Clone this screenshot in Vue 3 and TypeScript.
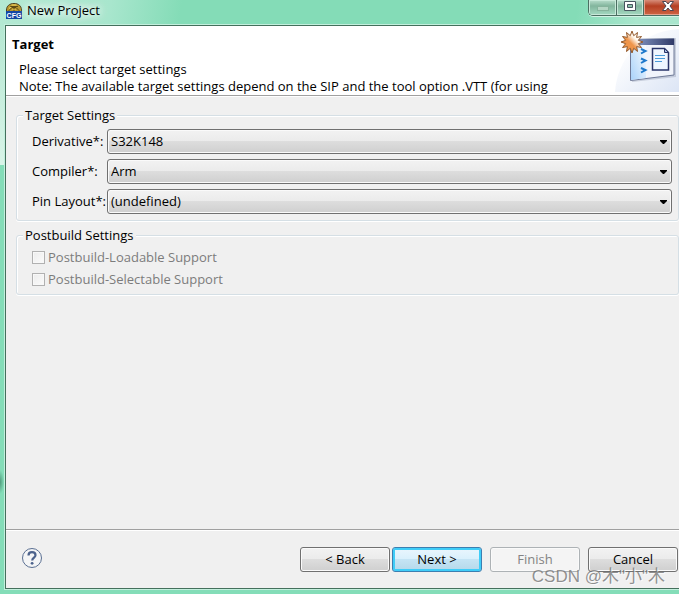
<script setup lang="ts">
import { reactive } from 'vue'

interface SelectField {
  id: string
  label: string
  value: string
}

interface CheckField {
  id: string
  label: string
  checked: boolean
}

const targetFields = reactive<SelectField[]>([
  { id: 'derivative', label: 'Derivative*:', value: 'S32K148' },
  { id: 'compiler', label: 'Compiler*:', value: 'Arm' },
  { id: 'pin-layout', label: 'Pin Layout*:', value: '(undefined)' },
])

const postbuildFields = reactive<CheckField[]>([
  { id: 'loadable', label: 'Postbuild-Loadable Support', checked: false },
  { id: 'selectable', label: 'Postbuild-Selectable Support', checked: false },
])
</script>

<template>
  <div class="window">
    <header class="titlebar">
      <svg class="app-icon" viewBox="0 0 16 16" aria-hidden="true">
        <path d="M.5 10V7C.5 3 3.500.5 8 .5S15.500 3 15.500 7v3z" fill="#b8982f" stroke="#4a4020" />
        <path d="M2.500 8l3.500-3.500h4L13.500 8M8 4.500V8M4 3.500h8" fill="none" stroke="#5c4a14" />
        <path d="M3 5.500l2-1.500M5.500 2h5M7 6v1M9 6v1" stroke="#f1d768" />
        <rect y="8" width="16" height="8" fill="#1446a4" />
        <text class="app-icon-text" x="8" y="15" text-anchor="middle" fill="#fff">CFG</text>
      </svg>
      <h1 class="title">New Project</h1>
      <div class="controls">
        <button class="control minimize" type="button" aria-label="Minimize" disabled>
          <svg viewBox="0 0 12 12" aria-hidden="true">
            <rect x=".5" y="6.500" width="11" height="4" fill="#b4d6c4" stroke="#86b39c" />
          </svg>
        </button>
        <button class="control maximize" type="button" aria-label="Maximize">
          <svg viewBox="0 0 12 12" aria-hidden="true">
            <path d="M.5 1.500h11v9H.5z" fill="#fff" stroke="#485660" />
            <path d="M3.500 4.500h5v3h-5z" fill="#8cc4aa" stroke="#485660" />
          </svg>
        </button>
        <button class="control close" type="button" aria-label="Close">
          <svg viewBox="0 0 12 12" aria-hidden="true">
            <path
              d="M.5 1.500h3.500l2 2.500 2-2.500h3.500L8 6l3.500 4.500H8L6 8l-2 2.500H.5L4 6z"
              fill="#fff"
              stroke="#4c4450"
            />
          </svg>
        </button>
      </div>
    </header>

    <main class="client">
      <section class="banner">
        <div class="banner-text">
          <h2 class="banner-title">Target</h2>
          <p class="banner-message">
            Please select target settings<br />
            Note: The available target settings depend on the SIP and the tool option .VTT (for using
          </p>
        </div>
        <svg class="banner-art" viewBox="0 0 64 66" aria-hidden="true">
          <defs>
            <linearGradient id="glow" x1="0" y1="0" x2="1" y2="1">
              <stop offset=".2" stop-color="#fff" />
              <stop offset="1" stop-color="#dce5f5" />
            </linearGradient>
            <linearGradient id="bar" x1="0" x2="1" y1="0" y2="0">
              <stop offset="0" stop-color="#8ca0cc" />
              <stop offset="1" stop-color="#303a68" />
            </linearGradient>
            <linearGradient id="side" x1="0" x2="1" y1="1" y2="0">
              <stop offset="0" stop-color="#a9d2fa" />
              <stop offset="1" stop-color="#fff" />
            </linearGradient>
            <linearGradient id="burst" x1="0" x2="1" y1="1" y2="0">
              <stop offset=".45" stop-color="#ef954a" />
              <stop offset=".65" stop-color="#fffaf2" />
            </linearGradient>
          </defs>
          <path d="M0 66C2 34 25 5 64 3v63z" fill="url(#glow)" />
          <path d="M17 17l44-5v39l-44 5z" fill="#9ba4b8" opacity=".45" />
          <path d="M15.500 13.500l43.500-1v36.500l-43.500 5.500z" fill="#f1f4fb" stroke="#6f7a98" />
          <path d="M16 14h15v38l-15 2z" fill="url(#side)" />
          <path d="M16 13h43v6H16z" fill="url(#bar)" />
          <path
            d="M26 23l4.500 2-4.500 2.500M26 32.500l4.500 2-4.500 2.500M26 42l4.500 2-4.500 2.500"
            fill="none"
            stroke="#1e78cb"
            stroke-width="2"
          />
          <path d="M37.500 22.500h12l4 4v17.500h-16z" fill="#eff6ff" stroke="#293469" stroke-width="1.500" />
          <path d="M49.500 22.500v4h4z" fill="#a8bce0" stroke="#293469" />
          <path d="M40 29.500h10M40 32.500h10M40 35.500h7" stroke="#4a9bd8" />
          <path
            d="M28 16l-4.700 1.700 3.200 3.800-4.900-.9.900 4.900-3.800-3.200L17 27l-1.700-4.700-3.800 3.200.9-4.900-4.900.9 3.200-3.800L6 16l4.700-1.700-3.200-3.800 4.900.9-.9-4.900 3.800 3.200L17 5l1.700 4.700 3.800-3.200-.9 4.900 4.900-.9-3.200 3.800z"
            fill="url(#burst)"
            stroke="#93592b"
          />
        </svg>
      </section>

      <form class="content" @submit.prevent>
        <fieldset class="group">
          <legend>Target Settings</legend>
          <div class="fields">
            <template v-for="field in targetFields" :key="field.id">
              <label :for="field.id">{{ field.label }}</label>
              <div class="combo">
                <select :id="field.id" v-model="field.value">
                  <option :value="field.value">{{ field.value }}</option>
                </select>
                <svg class="arrow" viewBox="0 0 7 4" aria-hidden="true">
                  <path d="M0 0h7v1L4 4H3L0 1z" />
                </svg>
              </div>
            </template>
          </div>
        </fieldset>

        <fieldset class="group">
          <legend>Postbuild Settings</legend>
          <div class="checks">
            <label v-for="field in postbuildFields" :key="field.id" class="check" :for="field.id">
              <input :id="field.id" v-model="field.checked" type="checkbox" disabled />
              {{ field.label }}
            </label>
          </div>
        </fieldset>
      </form>

      <footer class="footer">
        <button class="help" type="button" aria-label="Help">
          <svg viewBox="0 0 20 20" aria-hidden="true">
            <circle cx="10" cy="10" r="9.500" fill="#f4f5f6" stroke="#5a6f92" />
            <path
              d="M6.500 7.500C6.500 5 8 4.200 10 4.200s3.500 1 3.500 3c0 2.300-3.300 2.500-3.300 5.300"
              fill="none"
              stroke="#4c628c"
              stroke-width="2.200"
            />
            <circle cx="10.100" cy="15.300" r="1.400" fill="#4c628c" />
          </svg>
        </button>
        <div class="actions">
          <div class="pair">
            <button class="btn" type="button">&lt; Back</button>
            <button class="btn primary" type="button">Next &gt;</button>
          </div>
          <button class="btn" type="button" disabled>Finish</button>
          <button class="btn" type="button">Cancel</button>
        </div>
        <span class="watermark">CSDN @木"小"木</span>
      </footer>
    </main>
  </div>
</template>

<style>
body {
  margin: 0;
}
</style>

<style scoped>
.window {
  box-sizing: border-box;
  display: flex;
  flex-direction: column;
  min-height: 100vh;
  padding: 0 0 4px 4px;
  background:
    radial-gradient(ellipse 4px 12px at 0 482px, #4e9c7c, transparent),
    linear-gradient(#b5e8d2, #d9f4e8) 0 26px / 5px 139px no-repeat,
    linear-gradient(100deg, #b4e9d3, #a8e6cd 110px, #84dcb7 180px, #84dcb7 570px, #a9e6cd 630px) 0 0 / 100% 26px no-repeat,
    #84ddb8;
  color: #000;
  font: 13px/17px "Open Sans", "Noto Sans CJK SC", sans-serif;
}

.titlebar {
  display: flex;
  align-items: flex-start;
  height: 24px;
}

.app-icon {
  width: 16px;
  height: 16px;
  margin: 3px 5px 0 2px;
}

.app-icon-text {
  font: bold 7px "Liberation Sans", sans-serif;
}

.title {
  margin: 2px 0 0;
  font-size: 13px;
  font-weight: 400;
  text-shadow: 0 0 8px #fff, 0 0 8px #fff, 0 0 12px #fff;
}

.controls {
  display: flex;
  height: 15px;
  margin-left: auto;
  border: 1px solid #4c6f62;
  border-width: 0 0 1px 1px;
  border-radius: 0 0 0 5px;
  overflow: hidden;
  box-shadow: 0 1px #d3f3e5;
}

.control {
  display: flex;
  justify-content: center;
  width: 28px;
  padding: 0;
  border: 0;
  border-right: 1px solid #4c6f62;
  background: linear-gradient(#b9ddcc, #82b59d 6px, #a4d9c1);
  box-shadow: inset 0 0 0 1px #c8e8d9;
}

.control svg {
  width: 12px;
  height: 12px;
}

.maximize {
  width: 27px;
}

.close {
  width: 35px;
  padding-left: 12px;
  border-right: 0;
  background: linear-gradient(#d78d7a, #b53f23 6px, #cf6544);
  box-shadow: inset 1px -1px #e3a18c;
}

.client {
  display: flex;
  flex: 1;
  flex-direction: column;
  border: 1px solid #44705c;
  border-right: 0;
  background: #f0f0f0;
  box-shadow: 0 0 0 1px #c3efdd;
  margin: 1px 0 1px 1px;
}

.banner {
  display: flex;
  justify-content: space-between;
  border-bottom: 1px solid #a0a0a0;
  background: #fff;
  box-shadow: 0 1px #fff;
}

.banner-text {
  padding: 10px 0 0 6px;
}

.banner-title {
  margin: 0 0 8px;
  font-size: 13px;
  line-height: 17px;
}

.banner-message {
  margin: 0 0 0 7px;
}

.banner-art {
  flex: none;
  width: 64px;
  height: 66px;
  margin-bottom: 3px;
}

.content {
  display: flex;
  flex: 1;
  flex-direction: column;
  gap: 6px;
  padding: 11px 0 12px 10px;
}

.group {
  min-width: 0;
  margin: 0;
  padding: 0 6px 6px 15px;
  border: 1px solid #d5dfe5;
  border-radius: 3px;
  box-shadow: inset 1px 1px #fff, 0 1px #fff;
}

.group legend {
  margin-left: -9px;
  padding: 0 2px;
  background: #f0f0f0;
}

.fields {
  display: grid;
  grid-template-columns: 70px 1fr;
  gap: 5px;
  align-items: center;
  padding-top: 5px;
  white-space: nowrap;
}

.combo {
  display: flex;
  position: relative;
}

.combo select {
  flex: 1;
  height: 25px;
  padding: 0 20px 0 3px;
  border: 1px solid #707070;
  border-radius: 3px;
  appearance: none;
  background: linear-gradient(#f2f2f2, #ebebeb 49%, #dddddd 50%, #cfcfcf);
  box-shadow: inset 0 0 0 1px #fafafa;
  color: #000;
  font: inherit;
}

.arrow {
  position: absolute;
  top: 11px;
  right: 5px;
  width: 7px;
  height: 4px;
  pointer-events: none;
}

.checks {
  display: flex;
  flex-direction: column;
  gap: 5px;
  padding-top: 5px;
}

.check {
  display: flex;
  align-items: center;
  gap: 3px;
  color: #7c7c7c;
}

.check input {
  width: 13px;
  height: 13px;
  margin: 0;
  border: 1px solid #b1b1b1;
  appearance: none;
  background: linear-gradient(135deg, #ececec, #fbfbfb);
  box-shadow: inset 0 0 0 1px #f8f8f8;
}

.footer {
  display: flex;
  position: relative;
  align-items: flex-start;
  justify-content: space-between;
  padding: 17px 1px 16px 16px;
  border-top: 1px solid #a0a0a0;
  box-shadow: inset 0 1px #fff;
}

.help {
  display: flex;
  padding: 1px 0 0;
  border: 0;
  background: none;
}

.help svg {
  width: 20px;
  height: 20px;
}

.actions {
  display: flex;
  gap: 8px;
}

.pair {
  display: flex;
  gap: 2px;
}

.btn {
  width: 90px;
  height: 25px;
  padding: 0;
  border: 1px solid #707070;
  border-radius: 3px;
  background: linear-gradient(#f2f2f2, #ebebeb 49%, #dddddd 50%, #cfcfcf);
  box-shadow: inset 0 0 0 1px #fafafa;
  color: #000;
  font: inherit;
}

.btn:disabled {
  border-color: #adb2b5;
  background: #f4f4f4;
  color: #838383;
}

.primary {
  border-color: #3c7fb1;
  background: linear-gradient(#eaf6fd, #d9f0fc 49%, #c5e4f4 50%, #b4d8ea);
  box-shadow: inset 0 0 0 2px #3fcdf8;
}

.watermark {
  position: absolute;
  right: 14px;
  bottom: 1px;
  color: rgb(110 110 110 / 75%);
  font: 17px/20px "Liberation Sans", "Noto Sans CJK SC", sans-serif;
  text-shadow: 1px 1px rgb(255 255 255 / 70%);
  white-space: nowrap;
  pointer-events: none;
}
</style>
